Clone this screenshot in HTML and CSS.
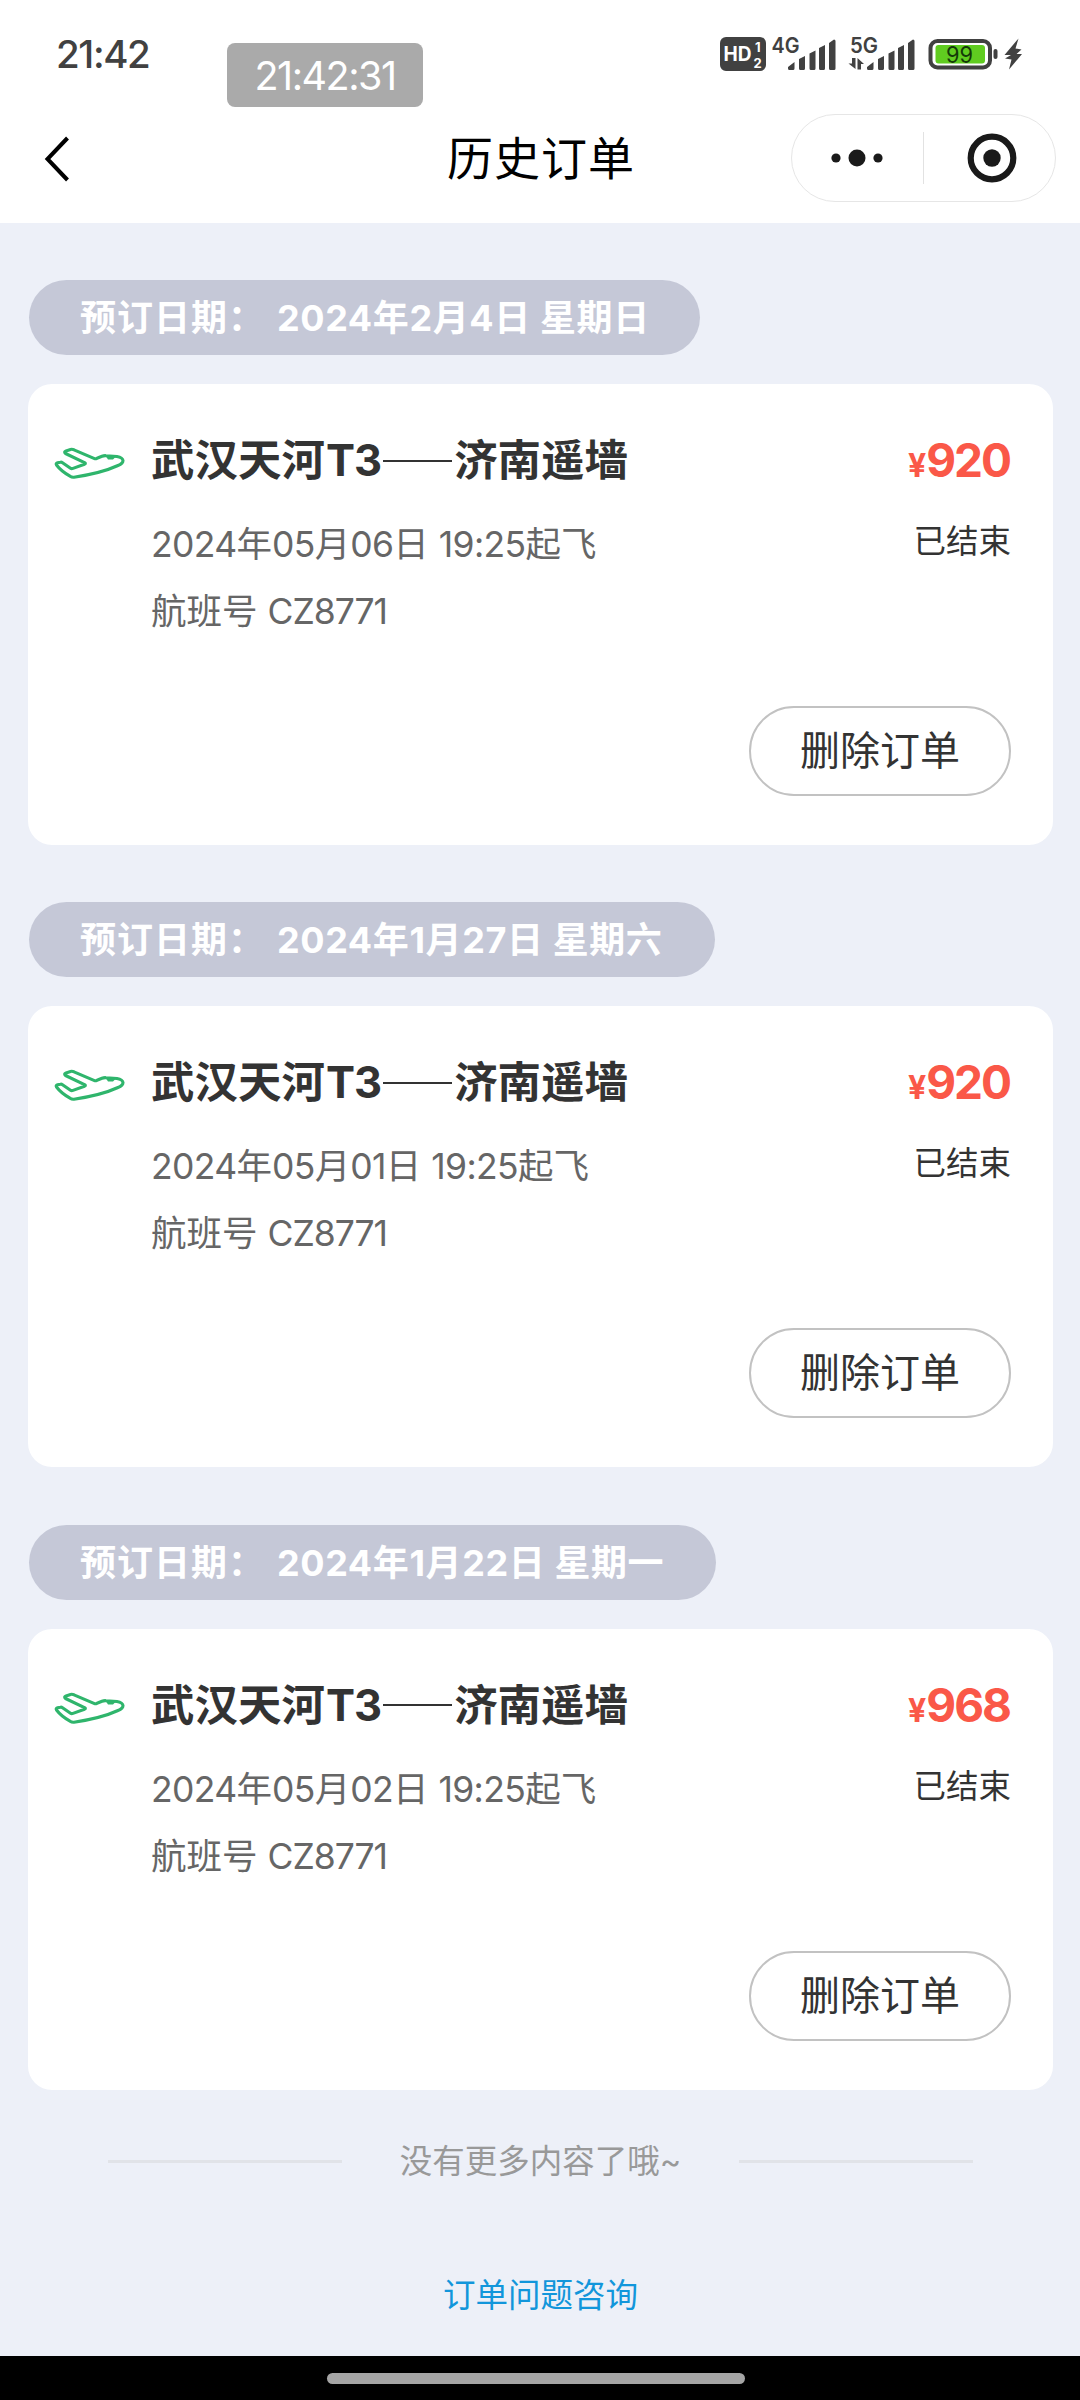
FILE: index.html
```html
<!DOCTYPE html>
<html lang="zh-CN">
<head>
<meta charset="utf-8">
<title>历史订单</title>
<link rel="stylesheet" href="styles.css">
</head>
<body>
<svg class="defs" width="0" height="0" aria-hidden="true">
  <symbol id="plane" viewBox="0 0 76 44">
    <path d="M13.500 9.500Q11.500 8 14 7L18.500 5.500Q20 5 22 5.800L42.500 14.600Q43.500 15 45 14.300L50 12.300Q52 11.500 54 11.700L65 12.500Q70.500 13.500 71 16.500Q71 19.500 66 21.500C53 27.500 40 30.500 22 33.200Q20 33.500 18 32.200Q9 27 4.500 21Q3.500 19.300 5.500 18.700L8.500 18.200Q9.500 18 10.500 18.700L18.500 24.300Q19.500 25 21 24.400L32.500 20.200Q34 19.500 33 18.800Z" fill="none" stroke="#2fb56c" stroke-width="3.100" stroke-linejoin="round"/>
    <path d="M54 12.500H64L61 15.500H56Z" fill="#2fb56c"/>
  </symbol>
</svg>
<div class="screen">
  <header class="top">
    <div class="status">
      <span class="clock">21:42</span>
      <svg class="sys" width="308" height="40" viewBox="718 34 308 40">
        <rect x="720" y="37" width="46" height="34" rx="6" fill="#414141"/>
        <text x="723.500" y="61" font-size="20" font-weight="700" fill="#fff" textLength="28" lengthAdjust="spacingAndGlyphs">HD</text>
        <text x="755" y="51.500" font-size="13" font-weight="700" fill="#fff">1</text>
        <text x="753.500" y="67.500" font-size="13" font-weight="700" fill="#fff">2</text>
        <g fill="#414141">
          <text x="771.500" y="52.500" font-size="21" font-weight="600" textLength="28" lengthAdjust="spacingAndGlyphs">4G</text>
          <text x="850" y="52.500" font-size="21" font-weight="600" textLength="28" lengthAdjust="spacingAndGlyphs">5G</text>
          <path id="bars" d="M788 67L794.500 62V68.500Q794.500 70 793 70H789.500Q788 70 788 68.500ZM799 59L805 56V68.500Q805 70 803.500 70H800.500Q799 70 799 68.500ZM809.500 53.500L815.500 50.500V68.500Q815.500 70 814 70H811Q809.500 70 809.500 68.500ZM819 48L825 45V68.500Q825 70 823.500 70H820.500Q819 70 819 68.500ZM829 43L834 39.500Q835.500 39.500 835.500 41V68.500Q835.500 70 834 70H830.500Q829 70 829 68.500Z"/>
          <use href="#bars" x="79"/>
          <path d="M852 58H855.500V69L848.500 63.500H852ZM857.500 58L864 64H861V69.500H857.500Z"/>
          <rect x="993.500" y="49" width="4" height="10" rx="2"/>
          <path d="M1018.500 38.500L1004.500 55H1011L1005 58.500L1011.500 59.500L1009 69.500L1022 54H1016.500L1021.500 49.500L1015.500 48.500Z"/>
        </g>
        <rect x="930.500" y="41" width="59.500" height="26.500" rx="7" fill="#fff" stroke="#414141" stroke-width="4"/>
        <rect x="935.500" y="45" width="49.500" height="18.500" rx="3" fill="#60cc20"/>
        <text x="946" y="62.500" font-size="23" font-weight="400" fill="#143a08" textLength="27" lengthAdjust="spacingAndGlyphs">99</text>
      </svg>
    </div>
    <nav class="bar">
      <svg class="back" width="30" height="52" viewBox="0 0 30 52"><path d="M25.500 5L5.500 26L25.500 47" fill="none" stroke="#000" stroke-width="4"/></svg>
      <h1>历史订单</h1>
      <div class="capsule">
        <svg class="dots" width="54" height="20" viewBox="0 0 54 20" fill="#1a1a1a"><circle cx="6" cy="10" r="4.600"/><circle cx="27" cy="10" r="8.500"/><circle cx="48" cy="10" r="4.600"/></svg>
        <i class="split"></i>
        <svg class="ring" width="50" height="50" viewBox="0 0 50 50"><circle cx="25" cy="25" r="21.300" fill="none" stroke="#1a1a1a" stroke-width="6.200"/><circle cx="25" cy="25" r="8.700" fill="#1a1a1a"/></svg>
      </div>
    </nav>
    <div class="stamp">21:42:31</div>
  </header>

  <main>
    <section class="order">
      <h2 class="date w1"><span class="label">预订日期：</span><span class="day">2024年2月4日 星期日</span></h2>
      <article class="card">
        <svg class="plane" width="76" height="44"><use href="#plane"/></svg>
        <div class="info">
          <h3>武汉天河<b>T3</b><i class="dash"></i>济南遥墙</h3>
          <p class="dep"><span>2024</span>年<span>05</span>月<span>06</span>日 <span>19:25</span>起飞</p>
          <p class="flight">航班号 <span>CZ8771</span></p>
        </div>
        <div class="side"><div class="price"><small>¥</small>920</div><div class="state">已结束</div></div>
        <button class="del">删除订单</button>
      </article>
    </section>
    <section class="order">
      <h2 class="date w2"><span class="label">预订日期：</span><span class="day">2024年1月27日 星期六</span></h2>
      <article class="card">
        <svg class="plane" width="76" height="44"><use href="#plane"/></svg>
        <div class="info">
          <h3>武汉天河<b>T3</b><i class="dash"></i>济南遥墙</h3>
          <p class="dep"><span>2024</span>年<span>05</span>月<span>01</span>日 <span>19:25</span>起飞</p>
          <p class="flight">航班号 <span>CZ8771</span></p>
        </div>
        <div class="side"><div class="price"><small>¥</small>920</div><div class="state">已结束</div></div>
        <button class="del">删除订单</button>
      </article>
    </section>
    <section class="order">
      <h2 class="date w3"><span class="label">预订日期：</span><span class="day">2024年1月22日 星期一</span></h2>
      <article class="card">
        <svg class="plane" width="76" height="44"><use href="#plane"/></svg>
        <div class="info">
          <h3>武汉天河<b>T3</b><i class="dash"></i>济南遥墙</h3>
          <p class="dep"><span>2024</span>年<span>05</span>月<span>02</span>日 <span>19:25</span>起飞</p>
          <p class="flight">航班号 <span>CZ8771</span></p>
        </div>
        <div class="side"><div class="price"><small>¥</small>968</div><div class="state">已结束</div></div>
        <button class="del">删除订单</button>
      </article>
    </section>
    <div class="end"><span class="end-text">没有更多内容了哦~</span></div>
    <a class="help">订单问题咨询</a>
  </main>
  <footer class="home"><i></i></footer>
</div>
</body>
</html>
```
FILE: styles.css
```css
* { box-sizing: border-box; margin: 0; padding: 0; }
body, button, text { font-family: Inter, "Noto Sans CJK SC", sans-serif; }
i { font-style: normal; }
.defs { display: block; }
svg { display: block; flex: none; }

.screen { width: 1080px; height: 2400px; display: flex; flex-direction: column; background: #edf0f8; overflow: hidden; white-space: nowrap; }

.top { height: 223px; background: #fff; position: relative; flex: none; }
.status { height: 94px; padding: 14px 54px 0 56px; display: flex; justify-content: space-between; align-items: center; }
.clock { font-size: 38.500px; font-weight: 500; color: #414141; letter-spacing: -1.4px; }
.stamp { position: absolute; left: 227px; top: 43px; width: 196px; height: 64px; border-radius: 8px; background: #aaa; color: #fff; font-size: 39.500px; line-height: 66px; text-align: center; letter-spacing: -1.5px; }
.bar { height: 129px; padding: 0 24px 0 42px; display: grid; grid-template-columns: 300px 1fr 300px; align-items: center; }
.bar h1 { font-size: 46px; font-weight: 400; letter-spacing: 1px; text-align: center; padding-right: 16px; line-height: 60px; margin-top: -2px; color: #000; }
.capsule { width: 265px; height: 88px; justify-self: end; border: 1.5px solid #e6e6e6; border-radius: 44px; display: flex; align-items: center; padding: 0 38px 0 38px; justify-content: space-between; margin-top: -1px; }
.split { width: 1px; height: 52px; background: #e2e2e2; margin-right: 5px; }

main { flex: 1; padding: 57px 27px 0 28px; display: flex; flex-direction: column; }
.order { height: 622.4px; flex: none; display: flex; flex-direction: column; align-items: flex-start; gap: 29px; }
.date { height: 75px; margin-left: 1px; border-radius: 38px; background: #c5c8d7; color: #fff; font-size: 36px; line-height: 77px; font-weight: 700; padding-left: 51px; display: flex; }
.label { width: 197px; letter-spacing: 1px; }
.day { font-weight: 650; letter-spacing: 0.6px; }
.w1 { width: 671px; }
.w2 { width: 686px; }
.w3 { width: 687px; }
.card { width: 1025px; height: 461px; background: #fff; border-radius: 24px; padding: 46px 42px 49px 26px; display: grid; grid-template-columns: 97px 1fr auto; grid-template-rows: 1fr 90px; }
.plane { margin: 14px 0 0 -2px; }
.info h3 { font-size: 43.5px; line-height: 60px; height: 60px; font-weight: 700; color: #333; display: flex; align-items: center; }
.info h3 b { font-weight: 650; letter-spacing: -1px; margin-left: 1px; }
.dash { width: 69px; height: 2px; background: #333; margin: 1px 2px 0 2px; }
.dep, .flight { color: #666; font-size: 35.500px; line-height: 67px; height: 67px; }
.dep { margin-top: 21px; }
.dep span { letter-spacing: -0.65px; }
.flight span { letter-spacing: -1px; }
.side { text-align: right; }
.price { color: #fa5848; font-size: 46px; font-weight: 700; line-height: 60px; height: 60px; letter-spacing: -2px; padding-right: 1px; }
.price small { font-size: 32px; letter-spacing: 0; }
.state { color: #333; font-size: 32.500px; line-height: 60px; margin-top: 22px; }
.del { grid-column: 1 / 4; justify-self: end; width: 262px; height: 90px; border: 2px solid #c2c2c2; border-radius: 45px; background: #fff; color: #333; font-size: 40px; line-height: 84px; }

.end { display: flex; align-items: center; justify-content: center; gap: 58px; height: 60px; margin-top: -16px; color: #999; font-size: 32.500px; flex: none; }
.end-text { padding-bottom: 5px; }
.end::before, .end::after { content: ""; width: 234px; height: 3px; background: #e1e3e8; }
.help { align-self: center; margin-top: 75px; color: #1296db; font-size: 32.500px; line-height: 60px; }

.home { flex: none; height: 44px; background: #000; display: flex; justify-content: center; padding-top: 17px; padding-right: 8px; }
.home i { width: 418px; height: 11px; border-radius: 6px; background: #a5a5a5; }
```
